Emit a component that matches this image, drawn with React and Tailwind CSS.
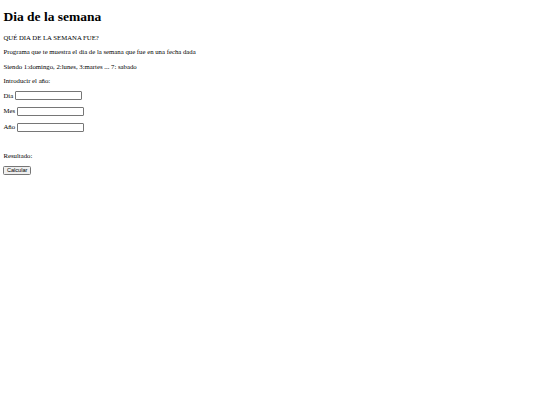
import React from "react";

const Campo = ({ label }) => (
  <p className="mb-[6.75px] flex items-center gap-[2px] h-[9px]">
    <span>{label}</span>
    <input
      type="text"
      className="w-[67px] h-[9px] border border-[#767676] rounded-[1px] bg-white px-[1px] text-[5.6px] outline-none"
    />
  </p>
);

export default function App() {
  return (
    <div className="min-h-[405px] bg-white text-black px-[3.4px] pt-[9px] font-['Liberation_Serif','Times_New_Roman',serif] text-[6.75px] leading-[7.75px]">
      <h1 className="text-[13.5px] leading-[15.5px] font-bold mb-[9px]">Dia de la semana</h1>
      <p className="mb-[6.75px]">QUÉ DIA DE LA SEMANA FUE?</p>
      <p className="mb-[6.75px]">Programa que te muestra el dia de la semana que fue en una fecha dada</p>
      <p className="mb-[6.75px]">Siendo 1:domingo, 2:lunes, 3:martes ... 7: sabado</p>
      <p className="mb-[6.75px]">Introducir el año:</p>
      <div className="-mt-[0.5px]">
        <Campo label="Dia" />
        <Campo label="Mes" />
        <Campo label="Año" />
      </div>
      <p className="mt-[20px] mb-[6.75px]">Resultado:</p>
      <button className="h-[9px] px-[2.5px] border border-[#767676] rounded-[1.5px] bg-[#efefef] text-[5.6px] leading-none font-['Liberation_Sans',Arial,sans-serif]">
        Calcular
      </button>
    </div>
  );
}
